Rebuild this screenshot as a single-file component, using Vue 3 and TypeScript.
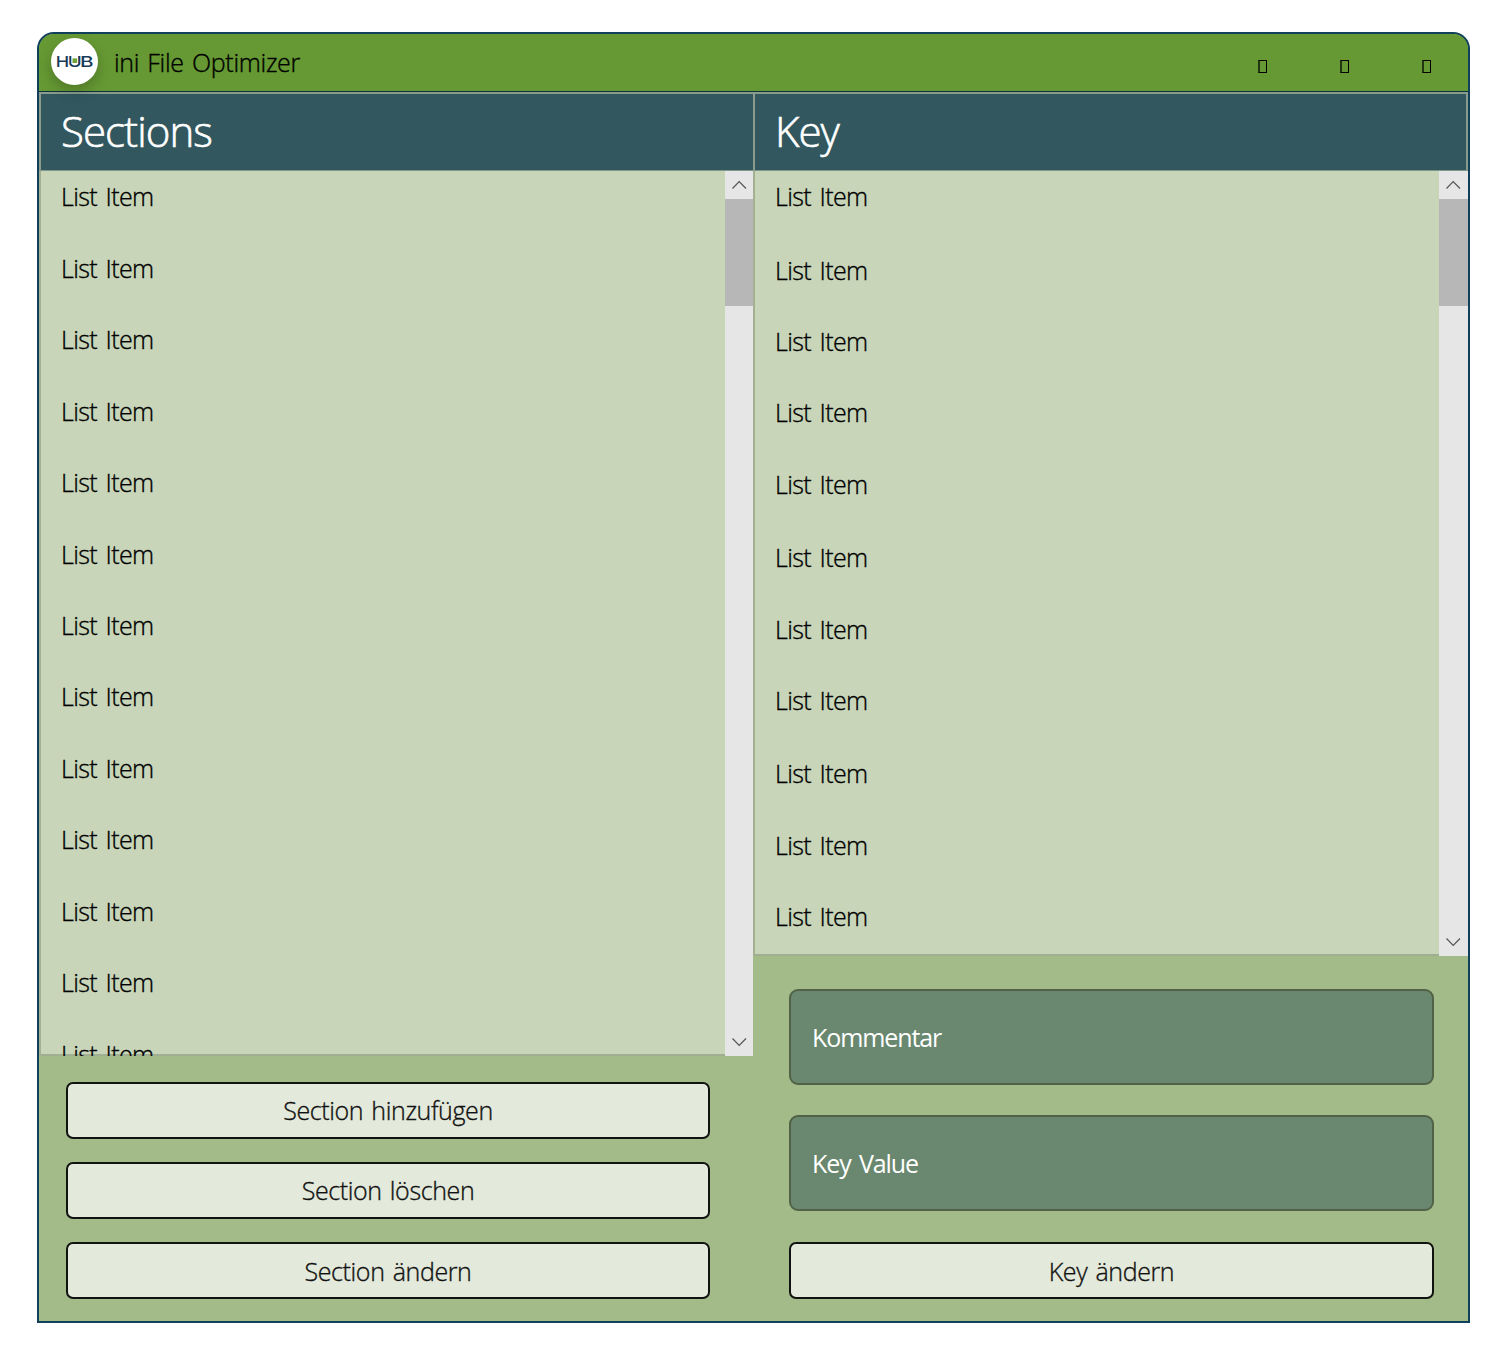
<script setup lang="ts">
const label = 'List Item'
const sectionRows: number[] = [72, 71, 72, 71, 72, 71, 71, 72, 71, 72, 71, 72, 71]
const keyRows: number[] = [74, 71, 71, 72, 73, 72, 71, 73, 72, 71, 72]
const sectionActions: string[] = ['Section hinzufügen', 'Section löschen', 'Section ändern']
const fields: string[] = ['Kommentar', 'Key Value']
</script>

<template>
  <main class="window">
    <header class="titlebar">
      <div class="logo">
        <svg width="47" height="47" viewBox="0 0 47 47">
          <g class="logo-text">
            <text x="4.8" y="29" textLength="13.4" lengthAdjust="spacingAndGlyphs">H</text>
            <text x="16.7" y="29" textLength="14" lengthAdjust="spacingAndGlyphs">U</text>
            <text x="28.9" y="29" textLength="13.6" lengthAdjust="spacingAndGlyphs">B</text>
          </g>
          <rect x="20.6" y="18" width="6.2" height="8" fill="#fff" />
          <rect x="21.5" y="20.4" width="4.6" height="4.6" fill="#72a536" />
        </svg>
      </div>
      <h1>ini File Optimizer</h1>
      <div class="controls"><i></i><i></i><i></i></div>
    </header>
    <div class="columns">
      <section class="column sections">
        <h2>Sections</h2>
        <div class="list">
          <ul>
            <li v-for="(h, i) in sectionRows" :key="i" :style="{ height: h + 'px' }">{{ label }}</li>
          </ul>
          <div class="scrollbar">
            <svg width="29" height="28" viewBox="0 0 29 28"><path d="M7.5 17.5 14.2 10.5 21 17.5" /></svg>
            <div class="thumb"></div>
            <svg class="down" width="29" height="28" viewBox="0 0 29 28"><path d="M7.5 10.5 14.2 17.5 21 10.5" /></svg>
          </div>
        </div>
        <div class="actions">
          <button v-for="a in sectionActions" :key="a">{{ a }}</button>
        </div>
      </section>
      <section class="column keys">
        <h2>Key</h2>
        <div class="list">
          <ul>
            <li v-for="(h, i) in keyRows" :key="i" :style="{ height: h + 'px' }">{{ label }}</li>
          </ul>
          <div class="scrollbar">
            <svg width="29" height="28" viewBox="0 0 29 28"><path d="M7.5 17.5 14.2 10.5 21 17.5" /></svg>
            <div class="thumb"></div>
            <svg class="down" width="29" height="28" viewBox="0 0 29 28"><path d="M7.5 10.5 14.2 17.5 21 10.5" /></svg>
          </div>
        </div>
        <div class="actions">
          <div v-for="f in fields" :key="f" class="field">{{ f }}</div>
          <button>Key ändern</button>
        </div>
      </section>
    </div>
  </main>
</template>

<style>
body { margin: 0; background: #fff; overflow: hidden; }
</style>

<style scoped>
* { box-sizing: border-box; }
.window {
  margin: 32px 0 0 37px;
  width: 1433px;
  height: 1291px;
  border: 2px solid #10405a;
  border-radius: 17px 17px 0 0;
  background: #a2bb88;
  font-family: 'Open Sans', 'Noto Sans', sans-serif;
  font-size: 25px;
  font-weight: 300;
  -webkit-text-stroke: 0.35px currentColor;
  color: #000;
}
.titlebar {
  height: 58px;
  display: flex;
  align-items: center;
  background: #669933;
  border-bottom: 1px solid #0a3340;
  border-radius: 15px 15px 0 0;
}
.logo {
  width: 47px;
  height: 47px;
  margin: -2px 0 0 12px;
  border-radius: 50%;
  background: #fff;
  box-shadow: 0 6px 14px rgba(0, 0, 0, 0.22);
  position: relative;
  z-index: 1;
  -webkit-text-stroke: 0;
}
.logo svg { display: block; }
.logo-text { font: 500 14.6px 'Inter', sans-serif; fill: #173b59; }
h1 { margin: 0 0 0 16px; font-size: 25px; font-weight: inherit; line-height: 41px; letter-spacing: -0.3px; word-spacing: 2px; }
.controls { margin: 7px 37px 0 auto; display: flex; gap: 73px; }
.controls i { width: 9px; height: 13px; border: 1px solid #000; border-left: 2px solid #223611; }
.columns { display: flex; height: 1229px; }
.column { display: flex; flex-direction: column; }
.sections { width: 714px; }
.keys { width: 715px; }
h2 {
  margin: 0;
  height: 79px;
  flex: none;
  padding-left: 20px;
  border: 2px solid #8b9c8c;
  border-bottom: 1px solid #7f968b;
  border-right: 0;
  background: #32575f;
  color: #fff;
  font-size: 42px;
  font-weight: 300;
  -webkit-text-stroke-width: 0.6px;
  line-height: 74px;
  letter-spacing: -0.95px;
}
.keys h2 { border-right: 2px solid #8b9c8c; }
.list { display: flex; flex: none; height: 885px; background: #c8d5b9; overflow: hidden; }
.keys .list { height: 785px; }
ul {
  flex: 1;
  margin: 0;
  padding: 0 0 0 20px;
  list-style: none;
  border-left: 2px solid #a3b094;
  background: linear-gradient(#a0ae91, #a0ae91) bottom / 100% 2px no-repeat;
}
li { line-height: 51px; letter-spacing: -0.6px; word-spacing: 2.5px; }
.scrollbar { width: 28px; background: #e6e6e6; display: flex; flex-direction: column; }
.keys .scrollbar { width: 29px; }
.scrollbar svg { flex: none; display: block; }
.scrollbar path { fill: none; stroke: #555; stroke-width: 1.2; }
.thumb { height: 107px; background: #b7b7b7; }
.down { margin-top: auto; }
.actions { display: flex; flex-direction: column; gap: 23.4px; padding: 25.6px 43px 0 27px; }
.keys .actions { gap: 30.8px; padding: 32.6px 34px 0 36px; }
button {
  height: 57px;
  flex: none;
  padding: 0;
  border: 2px solid #111310;
  border-radius: 7px;
  background: #e3e9db;
  color: #111;
  font: inherit;
  -webkit-text-stroke: inherit;
  letter-spacing: -0.38px;
  word-spacing: 2px;
}
.field {
  height: 96px;
  flex: none;
  padding-left: 21px;
  border: 2px solid #526247;
  border-radius: 9px;
  background: #69886f;
  color: #fff;
  font-weight: 400;
  -webkit-text-stroke: 0;
  line-height: 93px;
  letter-spacing: -1.1px;
  word-spacing: 3px;
}
</style>
